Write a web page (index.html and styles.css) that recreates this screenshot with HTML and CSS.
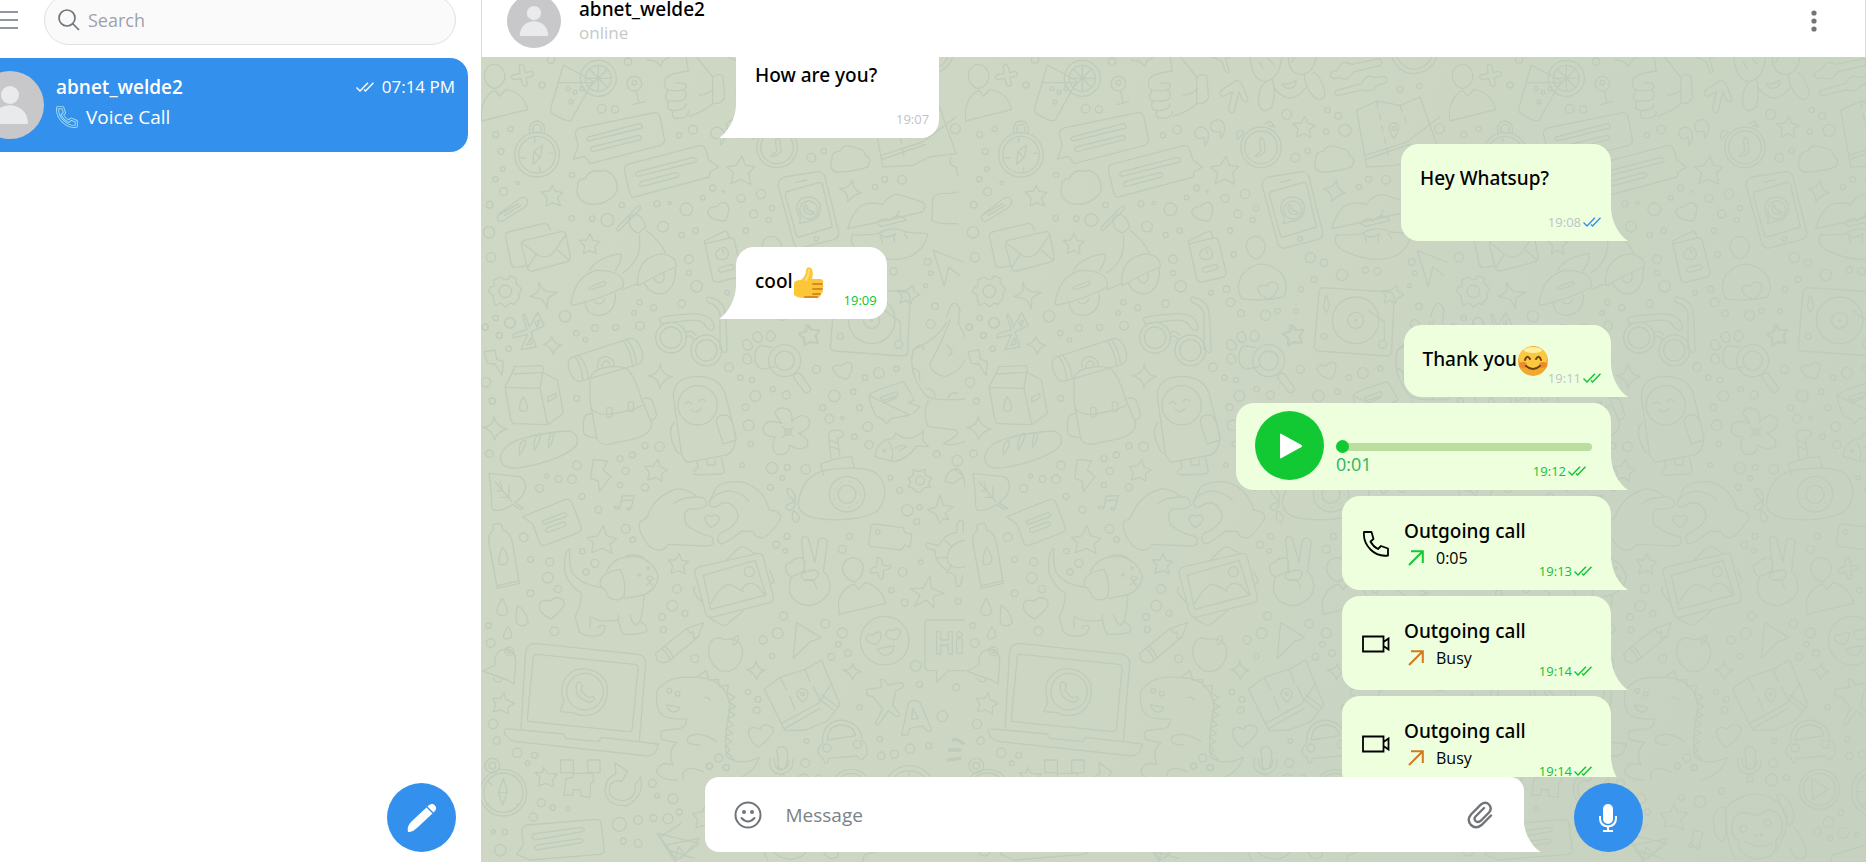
FILE: index.html
```
<!DOCTYPE html>
<html lang="en">

<head>
    <meta charset="utf-8">
    <title>Chat</title>
    <link rel="stylesheet" href="styles.css">
</head>

<body>
    <!-- shared icons -->
    <svg class="sprite" aria-hidden="true">
        <symbol id="checks" viewBox="0 0 18 10">
            <path d="M0.5 5.500L4 9L12 0.700M8 7.500L9.500 9L17.500 0.700" fill="none" stroke="currentColor" stroke-width="1.400" />
        </symbol>
        <symbol id="person" viewBox="0 0 68 68">
            <circle cx="34" cy="34" r="34" fill="#c8c8ca" />
            <circle cx="34" cy="24" r="9" fill="#e9eaec" />
            <path d="M16 53C16 28 52 28 52 53Z" fill="#e9eaec" />
        </symbol>
        <symbol id="phone" viewBox="0 0 26 26">
            <path d="M1 1H8.500L10.500 8L7.500 10.500Q10 15.500 15 18L18 15L25 17.500V24.500Q15 26 7.500 18.500Q0 11 1 1Z" fill="none" stroke="currentColor" stroke-width="1.800" stroke-linejoin="round" />
        </symbol>
        <symbol id="video" viewBox="0 0 28 18">
            <path d="M1 1.500H21.500V16.500H1ZM21.500 7L26.500 3.500V14.500L21.500 11" fill="none" stroke="currentColor" stroke-width="1.800" />
        </symbol>
        <symbol id="arrow" viewBox="0 0 16 16">
            <path d="M1 15L14.500 1.500M3 1.200H14.800V13" fill="none" stroke="currentColor" stroke-width="2" />
        </symbol>
    </svg>

    <div class="app">
        <aside class="sidebar">
            <div class="sidebar-top">
                <button class="menu-btn" aria-label="Menu">
                    <svg width="22" height="18" viewBox="0 0 22 18"><path d="M0 1H22M0 9H22M0 17H22" stroke="#70757f" stroke-width="1.500" /></svg>
                </button>
                <label class="search">
                    <svg width="22" height="22" viewBox="0 0 22 22" fill="none" stroke="#707579" stroke-width="1.700"><circle cx="9" cy="9" r="8" /><path d="M14.500 14.500L21 21" /></svg>
                    <input type="text" placeholder="Search" aria-label="Search">
                </label>
            </div>

            <a class="chat-row" href="#">
                <svg class="chat-avatar"><use href="#person" /></svg>
                <span class="chat-main">
                    <span class="chat-line">
                        <strong>abnet_welde2</strong>
                        <span class="chat-time"><svg class="checks"><use href="#checks" /></svg>07:14 PM</span>
                    </span>
                    <span class="chat-last">
                        <svg width="22" height="22" viewBox="0 0 26 26">
                            <path d="M2 2H8L10 8L7.500 10.500Q10 15.500 15 18L18 15.500L24 18V24Q15 25 8 18Q1 11 2 2Z" fill="none" stroke="#a5e2f3" stroke-width="3.600" stroke-linejoin="round" />
                            <path d="M2 2H8L10 8L7.500 10.500Q10 15.500 15 18L18 15.500L24 18V24Q15 25 8 18Q1 11 2 2Z" fill="none" stroke="#3390ec" stroke-width="1.400" stroke-linejoin="round" />
                        </svg>
                        Voice Call
                    </span>
                </span>
            </a>

            <button class="round-btn compose" aria-label="New message">
                <svg width="30" height="30" viewBox="0 0 30 30">
                    <path d="M1 29C0 24 2 21 5 18L19.500 4.500L25.500 10.500L11 24C8 27 5 29 1 29Z" fill="#fff" />
                    <path d="M20.500 3.500L22.500 1.800C26-1 31 4 28.300 7.500L26.500 9.500Z" fill="#fff" />
                </svg>
            </button>
        </aside>

        <main class="chat">
            <header class="chat-header">
                <svg class="header-avatar"><use href="#person" /></svg>
                <div class="header-name">
                    <h1>abnet_welde2</h1>
                    <p>online</p>
                </div>
                <button class="more-btn" aria-label="More">
                    <svg width="6" height="22" viewBox="0 0 6 22" fill="#707579"><circle cx="3" cy="3" r="2.600" /><circle cx="3" cy="11" r="2.600" /><circle cx="3" cy="19" r="2.600" /></svg>
                </button>
            </header>

            <div class="chat-body">
                <svg class="wallpaper" aria-hidden="true">
                    <defs>
                        <pattern id="doodles" width="484" height="805" patternUnits="userSpaceOnUse" viewBox="0 0 1452 2415">
                            <g fill="none" stroke="#bfcbbb" stroke-width="4" stroke-linejoin="round" stroke-linecap="round">
                                <!-- top of the tile -->
                                <g transform="translate(-75 0)">
                                    <path d="M115 22C75 25 75 85 115 95C160 85 155 25 115 22ZM76 192V160C85 120 105 100 120 102L130 118L150 97C190 105 210 130 214 158Z" />
                                    <path d="M190 25Q200 18 205 30L208 47L225 43Q238 46 229 58L210 62L214 82Q210 93 200 84L195 65L175 68Q160 62 170 54L192 49Z" />
                                    <path d="M322 24L411 72L345 190Q335 198 290 170Q280 160 285 150ZM305 77H408" />
                                    <circle cx="427" cy="64" r="54" /><circle cx="427" cy="64" r="39" />
                                    <path d="M427 25V103M388 64H466M400 37L454 91M454 37L400 91" />
                                    <circle cx="336" cy="95" r="6" /><circle cx="357" cy="106" r="6" /><circle cx="378" cy="95" r="6" /><circle cx="345" cy="135" r="6" />
                                    <circle cx="535" cy="80" r="22" /><circle cx="535" cy="77" r="7" /><path d="M542 103L549 138M530 143L566 134" />
                                    <path d="M690 0L697 42Q630 50 627 70Q620 95 640 100Q680 105 690 92V82Q675 75 660 78M635 102Q620 130 640 132Q690 135 690 118Q692 100 680 100M637 134Q630 160 650 160Q690 160 690 140M650 163Q645 185 665 184Q700 184 697 162M722 0L770 60V140Q750 160 700 178M730 115Q760 112 772 95M772 60Q780 48 800 56L806 120Q800 140 775 140" />
                                    <path d="M810 -2L845 12L856 42Q862 52 867 42L857 5L880 -5M573 8L600 14L615 28L620 12L640 0" />
                                    <path d="M890 70L843 100Q835 115 850 118L878 104L865 155Q870 172 882 165L897 105L908 132Q920 140 924 125L903 75Z" />
                                    <path d="M930 0Q935 70 975 74Q1020 65 1025 0M1045 0Q1045 50 1085 53Q1120 50 1128 0M958 15L970 35M985 5L1000 22M1055 15L1065 0" />
                                    <path d="M975 75Q950 100 957 145Q970 175 995 150Q1010 110 998 70M1092 52Q1100 110 1135 128Q1165 125 1150 90Q1140 55 1120 45M1000 90Q1050 155 1098 92M1027 80Q1048 85 1068 70Q1070 90 1050 94Q1030 95 1027 80Z" />
                                    <path d="M1170 58Q1170 42 1192 40Q1205 5 1235 22L1320 5Q1330 15 1322 25L1240 45Q1225 75 1200 62L1180 65ZM1190 100L1265 80Q1280 48 1305 62L1335 58Q1345 70 1335 78L1312 84Q1295 110 1270 98L1195 116Q1178 112 1190 100Z" />
                                    <path d="M1355 0Q1375 48 1420 50Q1475 45 1490 0M1370 0Q1390 35 1420 37Q1460 35 1475 0" />
                                    <circle cx="243" cy="293" r="67" /><circle cx="243" cy="293" r="55" /><path d="M222 230Q215 195 243 192Q270 195 264 230M260 264L252 303L230 322L234 283ZM234 283L252 303M236 243V256M251 330V342M195 303H208M280 289H290" /><circle cx="243" cy="215" r="13" />
                                    <path d="M370 213L595 167Q608 165 612 180L625 245Q628 258 614 265L402 320L386 298L352 306L367 265L358 232Q358 218 370 213Z" />
                                    <path d="M397 240L550 200Q562 202 558 213L398 252Q388 248 397 240ZM408 270L548 235Q560 237 554 248L410 284Q400 280 408 270Z" />
                                    <path d="M515 322L733 265Q746 265 750 280L758 308L788 330L762 345L760 360L535 420Q525 420 522 410L506 345Q503 328 515 322Z" />
                                    <path d="M543 345L712 301Q725 304 719 315L545 358Q534 352 543 345ZM555 374L660 347Q673 350 666 360L556 389Q546 383 555 374Z" />
                                    <path d="M365 390Q362 365 388 365Q400 335 435 343Q448 335 470 353Q495 390 475 415Q440 450 395 440Q355 425 365 390Z" />
                                    <path d="M782 210Q760 215 765 235Q775 252 792 240L795 265Q808 250 805 228Q800 212 782 210ZM830 188Q808 195 812 214Q820 230 840 222L842 243Q858 225 853 205Q848 188 830 188Z" />
                                    <circle cx="963" cy="271" r="61" /><circle cx="963" cy="271" r="49" />
                                    <path d="M963 240Q955 250 963 282L945 297Q950 305 975 285L972 250ZM975 200L990 192L1004 210L985 205M892 248Q885 220 905 220L912 226Z" />
                                    <path d="M1128 305Q1125 285 1152 282Q1165 255 1205 275Q1225 275 1228 295Q1250 305 1235 330Q1190 345 1140 345Q1115 335 1128 305Z" />
                                    <path d="M1250 160L1310 132L1380 145L1440 120L1500 290L1420 300L1370 325L1280 330ZM1275 295L1400 255L1500 180M1280 306L1410 262" />
                                    <path d="M1310 135L1345 300M1380 145L1400 200" stroke-dasharray="20 16" />
                                    <path d="M1362 245Q1335 205 1360 197Q1390 200 1362 245Z" /><circle cx="1362" cy="215" r="6" />
                                    <path d="M130 470L195 422Q215 418 215 438Q210 450 200 455L140 492Q120 495 125 475L188 440M145 475L195 445" />
                                    <path d="M156 525L265 499Q278 500 284 520M156 525Q145 528 150 545L165 618Q168 632 180 632L208 627M205 550L315 524Q328 522 330 535L343 600Q343 610 335 614L230 642Q218 645 214 632L196 563Q196 553 205 550ZM202 560L250 597Q270 605 290 590L328 535M215 632L240 592M338 608L305 580" />
                                    <circle cx="148" cy="703" r="19" />
                                    <path d="M135 660L142 668L155 667L162 656L182 664L180 678L192 690L197 700L188 708L190 722L175 742L163 738L148 750L135 738L118 745L112 728L112 715L98 705L102 690L114 688L114 668Z" />
                                    <path d="M248 675Q260 702 275 704L305 706Q285 715 275 725L274 755Q262 725 250 725L222 718Q240 712 248 700Z" />
                                    <path d="M485 510L545 448Q560 445 550 460L490 520Q478 525 485 510ZM520 480Q550 455 570 510L548 528Q515 520 520 480ZM550 535Q560 610 500 648M570 520Q610 550 628 587M400 640Q425 600 495 590Q500 610 478 640M345 740Q355 660 420 640Q510 640 502 690Q440 725 350 745ZM400 690L445 673Q455 680 445 685L408 697Q395 700 400 690Z" />
                                    <path d="M545 685Q540 600 620 590Q665 600 660 630Q610 650 548 685M387 735Q390 775 430 775Q480 770 478 710M415 735Q435 750 447 725M565 680Q585 715 620 710Q660 695 658 635M592 660Q600 680 615 678Q630 665 622 650M500 698L545 680" />
                                    <path d="M745 552L805 523Q815 520 818 540M745 552L770 665Q775 678 788 675L850 660Q860 655 858 645L835 550Q833 540 820 543L750 560M792 575Q770 590 785 605Q820 615 817 585Q810 568 798 572L803 590M790 632L828 622Q840 632 830 637L795 646Q782 642 790 632Z" />
                                    <path d="M755 465Q760 448 783 448Q790 435 808 437Q828 450 808 492Q760 490 755 465Z" />
                                    <path d="M985 360L1090 343Q1102 345 1107 360L1148 525Q1150 540 1135 547L1035 573Q1020 575 1014 560L967 388Q963 370 985 360ZM990 405L1090 376Q1098 375 1100 385L1129 510L1030 540Q1022 542 1020 530L988 415ZM1020 376L1052 369" />
                                    <circle cx="1081" cy="545" r="7" /><path d="M1030 500L1033 483Q1010 445 1038 424Q1080 410 1093 445Q1095 490 1055 493Z" /><circle cx="1058" cy="459" r="27" /><path d="M1045 445Q1055 440 1053 455L1068 465Q1080 462 1070 472Q1040 475 1045 445Z" />
                                    <path d="M1175 515Q1195 450 1230 440Q1265 435 1280 443Q1300 410 1330 413L1400 435Q1410 445 1405 455L1400 465M1175 515Q1270 495 1400 465M1260 498Q1290 475 1300 492Q1320 470 1340 480L1350 490Q1310 500 1275 508ZM1190 533Q1260 535 1270 528Q1310 505 1350 525L1410 530M1190 533Q1175 560 1210 580Q1300 625 1370 595Q1410 570 1415 530M1270 530Q1290 550 1320 530M1275 540L1280 558M1315 535V555M1345 530L1355 545M1330 460L1320 480" />
                                    <path d="M947 538Q918 540 918 570Q925 600 950 607Q980 590 975 560Q965 538 947 538ZM905 725Q885 690 905 655Q960 590 1025 650Q1050 690 1030 720Q960 735 905 725ZM955 690Q970 680 982 688Q985 670 1008 678Q1025 695 990 726Q950 715 955 690Z" />
                                    <path d="M1430 425Q1440 405 1480 410L1505 405M1430 425L1428 490Q1440 502 1505 500M1432 580L1520 615M1432 580L1465 688L1478 630L1510 655M1485 300Q1475 325 1500 330L1505 355" />
                                    <path d="M610 785Q620 775 720 770Q770 775 775 810Q770 830 750 810Q740 785 700 790L615 800ZM755 720Q795 725 805 755Q812 800 813 880Q808 895 792 875V770Q785 745 760 738Q745 728 755 720ZM688 828Q705 815 720 835M690 840Q705 830 715 850" />
                                    <circle cx="645" cy="842" r="46" /><circle cx="645" cy="842" r="32" /><circle cx="751" cy="880" r="46" /><circle cx="751" cy="880" r="32" />
                                    <path d="M1150 692L1350 705Q1362 708 1362 725L1355 885Q1352 897 1340 897L1135 882Q1122 880 1123 868L1137 705Q1140 692 1150 692ZM1160 715Q1150 730 1155 735Q1145 745 1158 767Q1175 745 1165 735ZM1285 760L1333 795V850" />
                                    <circle cx="1247" cy="790" r="70" /><circle cx="1247" cy="790" r="24" /><circle cx="1247" cy="790" r="3" /><circle cx="1153" cy="838" r="9" /><circle cx="1328" cy="862" r="12" />
                                    <path d="M205 770Q215 790 220 810L245 767L265 805L225 825L240 870L195 878L215 832L172 843Q168 835 175 830L213 818L200 775ZM237 795L250 790L243 810ZM225 842L228 860L212 865Z" />
                                    <path d="M287 838Q292 860 318 865Q297 870 292 892Q287 870 262 862Q282 858 287 838ZM1190 370Q1190 400 1216 408Q1195 412 1175 434Q1180 408 1150 395Q1180 395 1190 370Z" />
                                    <path d="M289 385L298 403L321 406L304 422L314 447L290 437L271 447L273 423L256 405L280 402ZM402 530L411 550L432 554L416 568L420 590L401 580L382 590L386 567L370 550L392 549ZM858 298L868 325L896 328L878 348L884 382L855 367L825 380L833 348L812 330L840 325ZM1094 178L1103 198L1126 205L1108 217L1112 242L1092 230L1070 240L1074 215L1058 200L1083 198ZM1058 803L1070 820L1091 817L1080 838L1087 857L1062 853L1048 865L1045 842L1028 832L1052 823ZM1370 685L1375 705L1392 713L1370 725L1365 740L1350 730L1332 738L1338 718L1325 700L1350 702Z" />
                                    <circle cx="285" cy="8" r="11" /><circle cx="516" cy="14" r="11" /><circle cx="258" cy="84" r="9" /><circle cx="437" cy="155" r="13" /><circle cx="477" cy="157" r="11" /><circle cx="119" cy="233" r="9" /><circle cx="164" cy="216" r="8" /><circle cx="135" cy="283" r="9" /><circle cx="140" cy="336" r="7" /><circle cx="118" cy="367" r="8" /><circle cx="185" cy="378" r="5" /><circle cx="143" cy="404" r="12" /><circle cx="101" cy="443" r="10" /><circle cx="99" cy="526" r="17" /><circle cx="348" cy="354" r="8" /><circle cx="347" cy="484" r="8" /><circle cx="409" cy="485" r="8" /><circle cx="454" cy="489" r="19" /><circle cx="497" cy="444" r="8" /><circle cx="603" cy="440" r="9" /><circle cx="641" cy="438" r="5" /><circle cx="691" cy="457" r="19" /><circle cx="621" cy="509" r="16" /><circle cx="677" cy="534" r="8" /><circle cx="719" cy="521" r="8" /><circle cx="740" cy="422" r="7" /><circle cx="770" cy="393" r="9" /><circle cx="802" cy="403" r="3" /><circle cx="669" cy="235" r="8" /><circle cx="711" cy="218" r="13" /><circle cx="105" cy="601" r="14" /><circle cx="699" cy="607" r="13" /><circle cx="699" cy="648" r="8" /><circle cx="722" cy="688" r="17" /><circle cx="677" cy="740" r="11" /><circle cx="593" cy="752" r="9" /><circle cx="550" cy="736" r="8" /><circle cx="534" cy="767" r="7" /><circle cx="552" cy="806" r="13" /><circle cx="479" cy="811" r="9" /><circle cx="417" cy="813" r="10" /><circle cx="361" cy="829" r="8" /><circle cx="388" cy="848" r="7" /><circle cx="327" cy="778" r="17" /><circle cx="162" cy="798" r="16" /><circle cx="119" cy="783" r="8" /><circle cx="130" cy="835" r="9" /><circle cx="88" cy="810" r="9" /><circle cx="158" cy="875" r="8" /><circle cx="855" cy="424" r="12" /><circle cx="915" cy="411" r="14" /><circle cx="948" cy="454" r="8" /><circle cx="893" cy="471" r="12" /><circle cx="938" cy="489" r="8" /><circle cx="870" cy="521" r="8" /><circle cx="881" cy="593" r="8" /><circle cx="860" cy="697" r="10" /><circle cx="813" cy="707" r="7" /><circle cx="872" cy="736" r="13" /><circle cx="903" cy="769" r="10" /><circle cx="977" cy="775" r="15" /><circle cx="1013" cy="762" r="8" /><circle cx="1068" cy="763" r="7" /><circle cx="1083" cy="697" r="8" /><circle cx="1122" cy="667" r="9" /><circle cx="1111" cy="602" r="15" /><circle cx="1152" cy="617" r="11" /><circle cx="1206" cy="654" r="17" /><circle cx="1276" cy="639" r="9" /><circle cx="1312" cy="643" r="11" /><circle cx="1040" cy="172" r="15" /><circle cx="1066" cy="302" r="13" /><circle cx="1103" cy="282" r="8" /><circle cx="1158" cy="224" r="8" /><circle cx="1215" cy="220" r="18" /><circle cx="1195" cy="176" r="10" /><circle cx="1163" cy="159" r="8" /><circle cx="1257" cy="390" r="8" /><circle cx="1286" cy="367" r="9" /><circle cx="1338" cy="368" r="13" /><circle cx="1380" cy="96" r="9" /><circle cx="1438" cy="87" r="8" /><circle cx="1415" cy="615" r="10" /><circle cx="1424" cy="649" r="7" /><circle cx="1409" cy="686" r="6" /><circle cx="1437" cy="748" r="10" /><circle cx="1498" cy="215" r="15" />
                                </g>
                                <!-- middle of the tile -->
                                <g transform="translate(-3 729)">
                                    <path d="M12 155L45 150L50 178L70 185L66 226L45 192L22 190ZM75 262L103 205Q98 198 110 200L185 197Q192 205 188 217L100 222M188 217L232 240L250 340L203 374L102 371Q95 370 92 355L75 262L180 265L203 374M180 265L188 217M130 290Q115 315 120 330Q130 340 141 328Q145 312 130 290ZM203 292L228 280V292L203 306Z" />
                                    <path d="M275 172L450 115Q475 115 488 160Q490 185 475 193L300 244Q275 245 265 200Q262 178 275 172ZM285 170Q305 195 308 240M297 168Q320 190 325 235M430 122Q455 160 458 200M442 118Q465 150 470 192M353 202Q350 172 378 170Q405 175 402 200M365 200Q370 180 380 183Q390 185 390 198M330 240Q335 210 370 204Q420 195 440 205Q465 230 482 290L515 370Q515 400 470 415L385 433Q355 433 350 415L330 300ZM332 325Q350 345 385 343Q450 335 485 317M318 345Q305 360 312 400Q318 412 347 413M318 345L335 340M490 295Q515 290 520 310L530 345Q525 360 513 360" />
                                    <rect x="380" y="322" width="16" height="30" rx="7" /><rect x="445" y="305" width="16" height="30" rx="7" />
                                    <path d="M580 290Q580 235 640 230Q715 225 735 280L768 410Q765 455 740 465L620 487L605 465ZM710 370Q705 345 735 345Q750 345 760 375L768 420L730 432ZM582 368Q565 385 575 420L588 450Q595 465 606 458M640 520L655 525L720 522Q735 520 732 510L725 475M650 485L655 500L640 515M680 480L683 495H705V478" /><circle cx="653" cy="316" r="59" /><path d="M616 312Q625 298 635 312M656 303Q668 292 677 303M634 328Q648 345 662 325" />
                                    <path d="M62 470Q70 430 130 415Q200 395 270 393Q300 405 290 435Q250 480 120 503Q60 510 62 470ZM118 465Q115 430 130 422Q140 415 135 435Q125 460 118 465ZM162 450Q160 415 175 402Q185 395 180 415Q170 445 162 450ZM205 442Q205 410 215 398Q225 395 220 410Q215 435 205 442Z" />
                                    <path d="M42 350Q48 380 82 387Q52 395 43 420Q40 390 8 382Q40 380 42 350ZM541 192Q545 225 577 230Q548 238 540 265Q537 235 505 227Q535 225 541 192ZM827 1083Q833 1110 855 1110Q833 1118 830 1140Q823 1117 800 1108Q825 1108 827 1083ZM1120 1090Q1120 1110 1143 1115Q1122 1120 1118 1140Q1112 1118 1090 1110Q1115 1110 1120 1090Z" />
                                    <path d="M27 520L120 530Q150 550 125 590L105 608L130 625L120 628L98 613Q70 635 40 630Q32 620 35 590ZM45 545L95 605M60 545L68 572L52 573M88 558L86 592L62 592M340 478L382 483L370 510L393 530L358 575L355 543L332 535Z" />
                                    <path d="M128 650L258 598Q270 595 276 610L304 680Q306 692 295 698L195 736Q185 738 180 730L158 672ZM190 662L252 638Q265 642 258 650L195 672Q182 670 190 662ZM198 685L253 665Q262 670 256 678L205 697Q192 695 198 685ZM427 588L463 587L453 625M427 588L420 622M427 602L460 600M402 620Q415 615 418 625Q405 632 402 620ZM440 625Q450 620 452 628Q445 635 440 625Z" />
                                    <path d="M480 665Q505 655 505 640Q530 585 590 567Q620 565 650 590Q680 590 680 615Q670 630 625 627Q605 640 620 675Q650 700 695 710Q710 738 680 738L565 733L555 745Q530 760 505 735Q470 690 480 665ZM580 612Q605 590 650 592M688 605Q700 580 745 572Q790 580 805 602M703 575Q710 545 780 545Q850 560 868 630Q910 635 900 660Q860 720 840 713Q825 710 820 695L785 693Q740 730 722 732Q705 720 720 700Q770 680 775 645Q760 600 725 610Q690 635 688 605ZM675 655Q680 640 696 650Q710 638 718 655Q715 670 694 682Q675 670 675 655Z" />
                                    <circle cx="923" cy="396" r="10" /><path d="M885 340Q890 320 915 325Q940 330 935 365Q965 335 985 355Q1000 385 955 400Q990 415 982 440Q955 455 930 435Q925 470 890 462Q870 445 885 410Q845 410 850 380Q860 355 905 370ZM923 396L908 380M923 396L940 382M923 396L940 408M923 396L908 412" />
                                    <path d="M955 610Q965 525 1040 510Q1150 495 1190 520Q1240 575 1190 635Q1120 670 1010 655Q955 645 955 610ZM1030 525L1022 492Q1060 475 1115 470L1123 505M1053 475L1045 405Q1050 385 1085 392Q1095 405 1083 412L1072 415L1080 470M1050 420L1073 430M1053 440L1075 448M945 605Q915 580 922 565Q950 570 945 605Q900 620 930 632Q950 620 945 605M940 632Q930 660 950 668Q970 650 940 632" /><circle cx="1101" cy="583" r="53" /><circle cx="1101" cy="583" r="27" /><circle cx="1101" cy="583" r="40" stroke-dasharray="1 27" />
                                    <path d="M1167 287Q1170 275 1270 245L1290 275L1302 300L1285 308L1320 320L1300 340M1290 345L1235 355L1218 372L1210 358L1190 350Q1175 330 1167 287ZM1202 292L1250 275Q1258 282 1250 288L1208 302ZM1210 310L1250 293M1185 470Q1190 420 1240 415L1247 398L1262 410Q1300 425 1330 392L1328 420L1345 440L1310 438Q1280 480 1240 485ZM1225 425Q1245 450 1235 482M1245 445Q1265 430 1280 440L1258 452" /><circle cx="1213" cy="452" r="4" />
                                    <path d="M1400 50Q1420 -20 1440 30L1435 70Q1450 95 1455 115M1410 60Q1390 120 1350 190Q1350 220 1395 230Q1440 215 1455 180M1400 65Q1380 110 1300 150Q1280 220 1340 290Q1380 305 1455 297M1400 135Q1430 160 1405 165M1300 205Q1325 210 1318 240M1340 265Q1365 265 1365 292M1405 297Q1405 275 1435 280M1345 300Q1325 340 1345 380Q1390 385 1425 390Q1450 400 1390 430Q1410 440 1455 425M1300 150Q1330 120 1330 150" />
                                    <path d="M1300 508L1315 515L1335 508L1335 525L1355 535L1345 548L1352 562L1335 562L1320 578L1308 575L1300 565L1285 560L1292 545L1285 535L1300 525Z" /><circle cx="1320" cy="542" r="13" />
                                    <circle cx="1432" cy="482" r="16" /><path d="M1395 545Q1400 510 1430 505Q1455 520 1455 560M1425 510L1450 530L1420 550L1395 545" />
                                    <path d="M40 692L38 675Q55 665 65 675L68 690Q90 695 98 730L118 850L52 865L27 730Q22 700 40 692ZM68 742Q50 780 60 793Q80 798 84 780Q82 760 68 742ZM50 858L118 842" />
                                    <path d="M1183 672L1270 683L1275 698L1295 702L1290 742L1275 735L1262 750L1178 740Q1165 740 1167 725L1172 685Q1172 674 1183 672ZM1340 740Q1330 725 1350 730L1375 738Q1395 700 1430 697L1432 670Q1440 655 1450 665V700M1340 745L1365 750Q1365 800 1425 825L1430 860Q1445 862 1448 825M1455 720Q1395 735 1403 785Q1415 810 1455 800M1395 720L1415 740M1368 775L1400 772M1400 820L1415 795" /><circle cx="1193" cy="695" r="7" />
                                    <path d="M270 747Q250 750 255 820Q270 860 305 880Q300 930 285 950L298 995Q310 1010 345 1008Q375 1005 375 980Q360 970 355 985M365 862Q300 855 275 815Q265 780 270 747M362 860Q350 820 420 808Q440 845 432 890Q410 910 385 890Q375 865 362 860ZM380 815Q400 765 470 770Q520 780 535 830Q530 870 490 885L435 895M440 768Q480 755 500 785M492 885Q490 930 480 965Q505 975 500 995Q470 1005 430 1003Q415 980 415 945M330 950Q330 975 330 985M335 950Q360 970 415 960M450 945Q455 970 470 975L480 965M500 835Q510 820 520 835L510 845ZM500 855L510 847L518 858" /><circle cx="477" cy="824" r="4" /><circle cx="504" cy="804" r="4" />
                                    <path d="M660 800L835 760Q848 760 850 772L880 890Q882 903 870 908L695 952Q682 953 677 940L645 820Q643 805 660 800ZM670 826L825 781L858 885L692 928ZM692 910Q725 855 745 853Q765 858 790 875M785 870Q800 840 830 855L855 885M735 785L775 745Q790 735 805 748L828 762M645 860Q635 870 650 890L665 905M690 955L725 975Q735 980 745 970L790 932M868 810L883 845L870 855" /><circle cx="808" cy="815" r="15" />
                                    <path d="M945 775Q930 790 917 795Q915 825 935 830Q925 850 930 880Q945 915 990 917Q1045 905 1050 860Q1045 820 1030 815L1042 725Q1030 705 1015 720L1005 788L985 715Q970 700 965 720L975 820M945 778Q965 765 975 785L970 815L935 830M965 820Q990 810 1005 810Q1025 820 1005 838L975 840Q960 835 965 820ZM975 842L1000 840L1010 865" />
                                    <path d="M1117 773Q1085 780 1088 810Q1095 840 1125 845Q1150 830 1150 800Q1145 775 1117 773ZM1077 943L1075 905Q1085 865 1122 852L1138 868L1155 847Q1205 860 1217 910ZM1192 775Q1205 765 1208 797L1230 797Q1240 805 1210 812V835Q1200 845 1193 817L1172 820Q1165 805 1190 800Z" />
                                    <path d="M67 895Q45 930 52 940Q70 955 83 938Q80 915 67 895ZM112 915Q105 965 112 972Q130 985 145 968Q140 935 112 915ZM83 980Q65 1010 73 1015Q85 1020 95 1010Q95 990 83 980ZM178 915Q180 895 212 903Q225 885 250 900Q262 920 213 957Q175 940 178 915ZM806 1295Q808 1275 840 1287Q850 1265 878 1282Q890 1300 835 1342Q805 1320 806 1295ZM1058 205Q1065 190 1085 198Q1100 180 1115 192Q1120 215 1100 238Q1065 230 1058 205Z" />
                                    <path d="M803 172M825 165Q820 195 845 208L885 200M825 165Q830 132 850 138L875 142M835 95Q815 98 820 115Q830 135 845 122Q850 105 835 95ZM870 92Q855 98 860 118Q875 132 885 112Q885 95 870 92ZM800 118Q782 120 790 143Q805 158 818 142Q815 125 800 118ZM800 160Q785 165 790 185Q805 200 816 185Q815 165 800 160ZM942 225Q955 215 962 222L992 265Q990 280 975 278L942 235Z" /><circle cx="914" cy="182" r="48" /><circle cx="914" cy="182" r="29" />
                                    <path d="M527 1060L620 985L670 968L655 1010L565 1085Q545 1095 530 1078ZM545 1045Q560 1055 570 1080M555 1040Q570 1050 580 1075M620 985L630 1000L640 995V1015L655 1010M735 1020Q700 1000 687 1040Q680 1085 720 1112Q750 1120 770 1100Q800 1065 780 1030Q760 1010 735 1020ZM760 1030Q755 1010 775 1007Q780 1030 760 1035" />
                                    <path d="M950 968L1022 1012Q1015 1018 990 1025L940 1075ZM1345 960H1455M1345 960Q1335 960 1335 975V1100Q1337 1112 1350 1112H1370V1146L1405 1112H1455M1370 995H1382V1020H1405V995H1417V1062H1405V1035H1382V1062H1370ZM1430 1015H1447V1060H1430Z" /><circle cx="1214" cy="1022" r="73" /><circle cx="1438" cy="1003" r="8" /><path d="M1158 1015Q1160 1000 1180 1005Q1190 990 1203 1000Q1205 1020 1190 1033Q1160 1030 1158 1015ZM1217 1000Q1225 985 1238 992Q1250 980 1262 993Q1262 1010 1243 1020Q1215 1015 1217 1000ZM1192 1047L1243 1037Q1240 1065 1215 1067Q1200 1062 1192 1047Z" />
                                    <path d="M8 1113L45 1095Q40 1050 80 1047Q110 1055 107 1090L102 1152L82 1140ZM40 1132Q40 1148 62 1145L66 1135" /><circle cx="88" cy="1054" r="13" /><circle cx="88" cy="1054" r="5" />
                                    <path d="M123 1285L137 1055Q143 1030 165 1030L475 1063Q497 1068 497 1090L478 1325M142 1258L160 1070Q160 1063 170 1063L465 1093Q475 1095 474 1105L457 1285Q455 1295 445 1295L150 1265Q142 1265 142 1258ZM72 1290Q75 1285 90 1287L250 1302L258 1315L355 1325L365 1312L535 1332Q530 1365 505 1368L110 1325Q75 1320 72 1290Z" /><circle cx="315" cy="1175" r="55" /><path d="M240 1235L252 1205Q230 1140 285 1110Q350 1095 380 1150Q390 1215 345 1240Q310 1255 280 1238ZM290 1150Q300 1140 307 1155L303 1172L325 1193L340 1190Q350 1200 330 1207Q280 1195 290 1150Z" />
                                    <path d="M640 1132Q560 1125 530 1175Q525 1230 550 1248Q580 1260 620 1257Q620 1290 575 1288L545 1293Q535 1315 550 1320L590 1328Q560 1355 580 1395Q540 1380 530 1415Q540 1440 590 1440M640 1132Q740 1130 750 1220Q730 1330 740 1370Q780 1400 837 1372Q825 1420 760 1440M650 1132L678 1112L687 1140L715 1138L718 1160L745 1155L742 1180M745 1180L765 1192L745 1205L767 1220L745 1232L765 1245L742 1258L760 1275L738 1285L758 1300L735 1310L755 1325L737 1335L750 1350L740 1358L755 1370L765 1385M560 1215L600 1222Q590 1240 575 1235Q565 1230 560 1215ZM672 1192Q685 1190 692 1202M710 1325Q660 1290 625 1310Q610 1335 660 1335M610 1440Q600 1405 640 1405L670 1415" /><circle cx="568" cy="1172" r="7" /><circle cx="593" cy="1181" r="7" />
                                    <path d="M853 1168L900 1132L975 1108L1025 1080L1080 1215L1040 1265L975 1290L915 1292ZM900 1132L920 1170M930 1190L945 1230M975 1108L990 1145M1000 1160L1015 1190M905 1270L1015 1210L1055 1150M915 1285L1020 1225M1015 1195L1060 1230M1025 1185L1075 1222" /><path d="M970 1207Q935 1180 965 1165Q1000 1170 970 1207Z" /><circle cx="968" cy="1182" r="5" />
                                    <path d="M1028 1330Q1025 1265 1085 1260Q1145 1270 1145 1320Q1165 1330 1160 1365L1145 1380Q1140 1382 1132 1368L1045 1375Q1045 1392 1035 1390L1028 1372Q1010 1365 1015 1345ZM1042 1320Q1045 1275 1085 1275Q1120 1275 1127 1307Z" /><circle cx="1041" cy="1344" r="12" /><circle cx="1132" cy="1333" r="12" />
                                    <path d="M1160 1168L1205 1162L1200 1140Q1215 1132 1222 1155L1265 1148Q1275 1155 1265 1165L1248 1172L1238 1215L1258 1240Q1258 1255 1245 1248L1225 1232L1195 1275Q1182 1278 1190 1262L1208 1225L1178 1190L1160 1185ZM1265 1305L1285 1210Q1300 1195 1320 1207L1355 1290Q1350 1300 1338 1290L1328 1278L1290 1285L1282 1305ZM1298 1225L1315 1255L1295 1258Z" />
                                    <path d="M1420 1320Q1425 1312 1450 1330M1408 1350H1440M1405 1380L1440 1375" stroke-width="10" />
                                    <path d="M978 73L992 90L1018 92L1005 108L1013 130L988 128L972 138L970 115L955 102L975 95ZM533 478L540 500L562 510L545 522L545 543L528 532L503 540L508 518L495 500L520 498ZM370 677L380 707L410 716L390 732L396 760L368 745L335 758L340 728L322 713L352 708ZM597 760L605 780L626 785L610 798L615 822L597 812L573 820L578 797L565 780L587 780ZM1380 585L1390 615L1420 620L1395 640L1408 660L1390 655L1378 670L1370 645L1343 628L1368 622ZM1350 828L1355 865L1393 880L1360 890L1362 925L1340 900L1303 920L1320 885L1290 865L1330 865ZM72 1178L78 1198L103 1210L85 1220L85 1242L65 1230L40 1235L47 1213L38 1195L62 1195Z" />
                                    <circle cx="15" cy="82" r="9" /><circle cx="90" cy="68" r="15" /><circle cx="58" cy="106" r="9" /><circle cx="18" cy="247" r="14" /><circle cx="37" cy="303" r="9" /><circle cx="290" cy="295" r="9" /><circle cx="28" cy="461" r="11" /><circle cx="200" cy="528" r="6" /><circle cx="236" cy="537" r="10" /><circle cx="276" cy="538" r="13" /><circle cx="179" cy="565" r="12" /><circle cx="291" cy="496" r="13" /><circle cx="306" cy="589" r="9" /><circle cx="355" cy="629" r="10" /><circle cx="420" cy="476" r="9" /><circle cx="457" cy="465" r="9" /><circle cx="437" cy="513" r="11" /><circle cx="420" cy="555" r="8" /><circle cx="495" cy="437" r="9" /><circle cx="539" cy="440" r="14" /><circle cx="495" cy="562" r="11" /><circle cx="437" cy="686" r="13" /><circle cx="458" cy="719" r="8" /><circle cx="131" cy="712" r="13" /><circle cx="152" cy="778" r="9" /><circle cx="209" cy="786" r="12" /><circle cx="203" cy="833" r="16" /><circle cx="234" cy="867" r="11" /><circle cx="152" cy="880" r="10" /><circle cx="307" cy="754" r="8" /><circle cx="345" cy="790" r="12" /><circle cx="318" cy="816" r="9" /><circle cx="223" cy="994" r="13" /><circle cx="26" cy="977" r="8" /><circle cx="32" cy="1029" r="13" /><circle cx="591" cy="867" r="13" /><circle cx="577" cy="917" r="16" /><circle cx="615" cy="940" r="9" /><circle cx="546" cy="951" r="10" /><circle cx="550" cy="989" r="9" /><circle cx="644" cy="1076" r="12" /><circle cx="747" cy="202" r="13" /><circle cx="781" cy="233" r="8" /><circle cx="816" cy="240" r="8" /><circle cx="826" cy="288" r="16" /><circle cx="878" cy="268" r="8" /><circle cx="919" cy="285" r="12" /><circle cx="796" cy="322" r="10" /><circle cx="806" cy="376" r="16" /><circle cx="812" cy="432" r="8" /><circle cx="786" cy="495" r="7" /><circle cx="876" cy="504" r="17" /><circle cx="922" cy="502" r="9" /><circle cx="977" cy="508" r="14" /><circle cx="907" cy="534" r="7" /><circle cx="871" cy="562" r="9" /><circle cx="1009" cy="208" r="12" /><circle cx="1063" cy="288" r="17" /><circle cx="1120" cy="275" r="8" /><circle cx="1028" cy="323" r="9" /><circle cx="1048" cy="356" r="13" /><circle cx="1087" cy="354" r="5" /><circle cx="1139" cy="323" r="9" /><circle cx="1163" cy="380" r="14" /><circle cx="1123" cy="410" r="8" /><circle cx="1167" cy="434" r="12" /><circle cx="1197" cy="219" r="16" /><circle cx="1155" cy="233" r="8" /><circle cx="1249" cy="206" r="8" /><circle cx="1352" cy="72" r="13" /><circle cx="1370" cy="463" r="10" /><circle cx="1231" cy="533" r="7" /><circle cx="1259" cy="571" r="9" /><circle cx="1282" cy="631" r="17" /><circle cx="1318" cy="622" r="8" /><circle cx="1310" cy="665" r="9" /><circle cx="1108" cy="709" r="9" /><circle cx="1087" cy="748" r="12" /><circle cx="921" cy="709" r="9" /><circle cx="889" cy="734" r="10" /><circle cx="916" cy="752" r="7" /><circle cx="1268" cy="816" r="13" /><circle cx="1322" cy="787" r="7" /><circle cx="1234" cy="871" r="8" /><circle cx="1274" cy="908" r="10" /><circle cx="1435" cy="904" r="9" /><circle cx="911" cy="948" r="12" /><circle cx="1036" cy="971" r="13" /><circle cx="893" cy="1000" r="16" /><circle cx="849" cy="1020" r="12" /><circle cx="877" cy="1068" r="8" /><circle cx="1087" cy="999" r="15" /><circle cx="1075" cy="1033" r="8" /><circle cx="1104" cy="1059" r="10" /><circle cx="1054" cy="1070" r="10" /><circle cx="1307" cy="1098" r="16" /><circle cx="1318" cy="1153" r="9" /><circle cx="1429" cy="1162" r="10" /><circle cx="804" cy="1176" r="8" /><circle cx="834" cy="1198" r="9" /><circle cx="830" cy="1231" r="10" /><circle cx="979" cy="1323" r="7" /><circle cx="1139" cy="1222" r="8" /><circle cx="1387" cy="1249" r="16" /><circle cx="1290" cy="1346" r="14" /><circle cx="1346" cy="1337" r="9" /><circle cx="1199" cy="1318" r="8" /><circle cx="1204" cy="1367" r="11" /><circle cx="1243" cy="1363" r="12" /><circle cx="39" cy="1272" r="14" /><circle cx="50" cy="1322" r="11" /><circle cx="111" cy="1358" r="14" /><circle cx="164" cy="1366" r="9" /><circle cx="143" cy="1390" r="7" /><circle cx="716" cy="1374" r="12" />
                                </g>
                                <!-- bottom of the tile -->
                                <g transform="translate(-363 2109)">
                                    <circle cx="430" cy="98" r="70" /><circle cx="430" cy="98" r="59" /><circle cx="397" cy="17" r="22" /><circle cx="397" cy="17" r="10" /><path d="M430 55L442 95L428 135L415 97ZM415 97H442M385 65L395 75M468 130L475 137M385 130L378 137" />
                                    <path d="M550 22L562 40L592 42L578 60L580 80L557 70L535 78L540 52L525 38L548 38ZM602 0H640V38H602ZM683 0H720V38H683ZM640 40L700 40L700 65L692 70L690 112L662 108V90L640 88L638 106L612 105L618 55L640 52ZM765 8L803 35L785 65Q770 55 750 75Q740 120 790 122Q830 115 825 75L842 50Q855 110 800 137Q740 140 735 90Q738 50 768 42Z" />
                                    <path d="M500 195L710 178Q722 180 723 190L733 270Q733 280 720 283L510 300L470 283L490 255L485 215Q485 200 500 195ZM520 222L665 202Q680 207 668 215L525 240Q508 232 520 222ZM530 255L660 236Q675 240 665 248L530 270Q518 262 530 255ZM892 220L1018 250L950 300ZM892 220L945 305L955 260L980 290" />
                                    <circle cx="544" cy="128" r="12" /><circle cx="578" cy="143" r="8" /><circle cx="624" cy="146" r="6" /><circle cx="520" cy="171" r="12" /><circle cx="400" cy="215" r="6" /><circle cx="434" cy="216" r="8" /><circle cx="421" cy="271" r="17" /><circle cx="778" cy="193" r="21" /><circle cx="834" cy="180" r="13" /><circle cx="880" cy="174" r="10" /><circle cx="924" cy="176" r="15" /><circle cx="790" cy="243" r="9" /><circle cx="834" cy="250" r="12" /><circle cx="877" cy="70" r="12" /><circle cx="891" cy="107" r="7" /><circle cx="939" cy="116" r="15" /><circle cx="958" cy="156" r="9" /><circle cx="1048" cy="18" r="9" /><circle cx="1098" cy="23" r="9" />
                                </g>
                                <g transform="translate(0 2019)">
                                    <path d="M890 75Q880 50 905 50Q922 55 920 75L915 110Q905 125 892 112ZM868 85Q860 130 900 132Q940 125 935 88M880 85Q878 118 900 120Q925 115 923 90M898 135L893 155H912L908 133M675 222L685 245L715 248L695 270L703 300L675 285L645 292L650 270L635 250L665 245ZM735 300L762 308L750 350M735 300L725 345M718 345Q730 335 735 348Q725 360 718 345ZM740 350Q750 345 755 355Q745 365 740 350Z" />
                                    <path d="M830 235Q870 190 930 193Q990 200 1015 260Q1010 340 960 380M830 235Q800 225 793 265Q795 330 820 335L830 320ZM830 235Q830 340 860 390M850 290Q850 240 900 250Q925 265 950 240Q1000 240 1000 290Q1000 320 980 330Q990 380 930 388Q865 380 868 330Q845 320 850 290ZM890 335Q930 360 970 340M985 200Q980 190 1000 195Q1040 225 1035 270L1020 290L1005 250ZM1035 290Q1080 350 1070 380Q1040 400 1020 350M1150 375L1250 345M1150 375L1145 396M555 345L655 325L600 385M540 320L600 280M560 360L640 385" />
                                    <circle cx="883" cy="296" r="10" /><circle cx="956" cy="279" r="10" /><circle cx="922" cy="316" r="3" /><circle cx="937" cy="314" r="3" /><circle cx="1111" cy="178" r="60" /><circle cx="1111" cy="178" r="48" /><path d="M1088 145L1138 178L1092 208Z" />
                                    <circle cx="1285" cy="185" r="78" /><circle cx="1285" cy="185" r="63" /><path d="M1285 122V248M1222 185H1348M1240 140L1330 230M1330 140L1240 230" />
                                    <circle cx="973" cy="99" r="13" /><circle cx="968" cy="150" r="18" /><circle cx="1012" cy="143" r="9" /><circle cx="818" cy="183" r="9" /><circle cx="697" cy="202" r="9" /><circle cx="753" cy="215" r="17" /><circle cx="1139" cy="277" r="16" /><circle cx="1176" cy="248" r="9" /><circle cx="1105" cy="305" r="12" /><circle cx="1144" cy="325" r="8" /><circle cx="1183" cy="308" r="16" /><circle cx="1222" cy="315" r="7" /><circle cx="686" cy="109" r="9" /><circle cx="736" cy="112" r="9" />
                                </g>
                            </g>
                        </pattern>
                    </defs>
                    <rect width="100%" height="100%" fill="url(#doodles)" />
                </svg>

                <div class="messages">
                    <div class="message in tall">
                        <p>How are you?</p>
                        <span class="meta">19:07</span>
                    </div>
                    <div class="message out tall">
                        <p>Hey Whatsup?</p>
                        <span class="meta read">19:08<svg class="checks"><use href="#checks" /></svg></span>
                    </div>
                    <div class="message in short">
                        <p>cool<svg class="emoji" viewBox="0 0 32 32" role="img" aria-label="thumbs up">
                                <path d="M1 16Q2 13 8 13Q13 9 13 3Q14-1 18 1Q21 4 19 12H28Q32 14 29 17Q32 19 29 22Q31 25 28 27Q27 32 22 31H11Q4 31 1 28Z" fill="#fbc638" />
                                <path d="M20 17H29M20 22H29M20 27H27M12 30H24" fill="none" stroke="#d98a1f" stroke-width="2" stroke-linecap="round" />
                                <path d="M13 13Q16 8 16 3" fill="none" stroke="#ffe07c" stroke-width="2" stroke-linecap="round" />
                            </svg></p>
                        <span class="meta sent">19:09</span>
                    </div>
                    <div class="message out short">
                        <p>Thank you<svg class="emoji" viewBox="0 0 32 32" role="img" aria-label="smile">
                                <circle cx="16" cy="16" r="15" fill="#f0a92c" />
                                <ellipse cx="16" cy="13" rx="14" ry="11" fill="#fbc93f" />
                                <ellipse cx="16" cy="5" rx="9" ry="3" fill="#fff0a0" />
                                <ellipse cx="6" cy="20" rx="4" ry="3" fill="#ee8a2c" /><ellipse cx="26" cy="20" rx="4" ry="3" fill="#ee8a2c" />
                                <path d="M8 15Q10 9 13 14M19 14Q22 9 24 15M9 21Q16 27 23 21" fill="none" stroke="#713f10" stroke-width="2" stroke-linecap="round" />
                            </svg></p>
                        <span class="meta">19:11<svg class="checks sent"><use href="#checks" /></svg></span>
                    </div>
                    <div class="message out audio">
                        <button class="play" aria-label="Play">
                            <svg width="24" height="26" viewBox="0 0 24 26"><path d="M1 1.500Q1 0 2.500 1L22.500 12Q24 13 22.500 14L2.500 25Q1 26 1 24.500Z" fill="#fff" /></svg>
                        </button>
                        <div class="track">
                            <input type="range" min="0" max="100" value="0" aria-label="Position">
                            <span>0:01</span>
                        </div>
                        <span class="meta sent">19:12<svg class="checks"><use href="#checks" /></svg></span>
                    </div>
                    <div class="message out call">
                        <svg class="call-icon"><use href="#phone" /></svg>
                        <div>
                            <p>Outgoing call</p>
                            <div class="call-status"><svg class="arrow ok"><use href="#arrow" /></svg>0:05</div>
                        </div>
                        <span class="meta sent">19:13<svg class="checks"><use href="#checks" /></svg></span>
                    </div>
                    <div class="message out call">
                        <svg class="call-icon"><use href="#video" /></svg>
                        <div>
                            <p>Outgoing call</p>
                            <div class="call-status"><svg class="arrow busy"><use href="#arrow" /></svg>Busy</div>
                        </div>
                        <span class="meta sent">19:14<svg class="checks"><use href="#checks" /></svg></span>
                    </div>
                    <div class="message out call">
                        <svg class="call-icon"><use href="#video" /></svg>
                        <div>
                            <p>Outgoing call</p>
                            <div class="call-status"><svg class="arrow busy"><use href="#arrow" /></svg>Busy</div>
                        </div>
                        <span class="meta sent">19:14<svg class="checks"><use href="#checks" /></svg></span>
                    </div>
                </div>

                <form class="composer">
                    <div class="composer-box">
                        <button type="button" aria-label="Emoji">
                            <svg width="28" height="28" viewBox="0 0 28 28" fill="none" stroke="#707579" stroke-width="2"><circle cx="14" cy="14" r="12.500" /><path d="M7.500 17Q14 24 20.500 17" stroke-linecap="round" /><circle cx="10" cy="11" r="1" /><circle cx="18" cy="11" r="1" /></svg>
                        </button>
                        <input type="text" placeholder="Message" aria-label="Message">
                        <button type="button" aria-label="Attach">
                            <svg width="26" height="28" viewBox="0 0 26 28" fill="none" stroke="#707579" stroke-width="2.400" stroke-linecap="round"><path d="M24 14.500L14.500 24Q9 28.500 4 24Q-0.500 19 4 13.500L14 3.500Q18.500 0 22 3.500Q25.500 7.500 22 11.500L13.500 20Q10.500 22 8.500 20Q6.500 17.500 8.500 15.500L17 7" /></svg>
                        </button>
                    </div>
                    <button type="button" class="round-btn" aria-label="Record voice">
                        <svg width="18" height="28" viewBox="0 0 18 28" fill="none" stroke="#fff" stroke-width="2"><rect x="4" y="0" width="10" height="20" rx="5" fill="#fff" stroke="none" /><path d="M1 12V14Q1 22 9 22.500Q17 22 17 14V12M9 22V27M4 27H14" /></svg>
                    </button>
                </form>
            </div>
        </main>
    </div>
</body>

</html>
```
FILE: styles.css
```
* {
    box-sizing: border-box;
}

body {
    margin: 0;
    overflow: hidden;
    font-family: "Open Sans", "Noto Sans", sans-serif;
    font-size: 18px;
    color: #000;
    background-color: #fff;
}

h1,
p {
    margin: 0;
}

button {
    padding: 0;
    border: none;
    background: none;
    cursor: pointer;
    display: flex;
    align-items: center;
    justify-content: center;
}

input {
    font-family: inherit;
    border: none;
    outline: none;
    background: none;
    padding: 0;
    margin: 0;
    min-width: 0;
}

.sprite {
    position: absolute;
    width: 0;
    height: 0;
}

/* the whole app is scrolled a little up and to the left */
.app {
    display: flex;
    height: calc(100vh + 15px);
    margin: -15px 0 0 -36px;
}

/* sidebar */
.sidebar {
    flex: 0 0 517px;
    display: flex;
    flex-direction: column;
    align-items: stretch;
    padding-bottom: 10px;
}

.sidebar-top {
    display: flex;
    align-items: center;
    gap: 26px;
    height: 72px;
    padding: 0 25px 2px 32px;
}

.search {
    flex: 1;
    display: flex;
    align-items: center;
    gap: 8px;
    height: 50px;
    padding: 0 13px;
    border: 1px solid #dfe1e5;
    border-radius: 25px;
    background-color: #fafafa;
}

.search input {
    flex: 1;
    font-size: 18px;
}

.search input::placeholder {
    color: #9ca3af;
}

.chat-row {
    display: flex;
    align-items: center;
    gap: 12px;
    height: 94px;
    margin: 1px 13px 0 0;
    padding: 0 13px 0 12px;
    border-radius: 18px;
    background-color: #3390ec;
    color: #fff;
    text-decoration: none;
}

.chat-avatar {
    flex: none;
    width: 68px;
    height: 68px;
}

.chat-main {
    flex: 1;
    display: flex;
    flex-direction: column;
    gap: 2px;
    padding-bottom: 6px;
    line-height: 28px;
}

.chat-line {
    display: flex;
    justify-content: space-between;
}

.chat-line strong {
    font-size: 19px;
    font-weight: 600;
}

.chat-time {
    display: flex;
    align-items: center;
    gap: 8px;
    font-size: 17px;
}

.chat-last {
    display: flex;
    align-items: center;
    gap: 8px;
    font-size: 19px;
}

.checks {
    width: 18px;
    height: 10px;
}

.round-btn {
    flex: none;
    width: 69px;
    height: 69px;
    border-radius: 50%;
    background-color: #3390ec;
}

.compose {
    margin: auto 25px 0 auto;
}

/* chat */
.chat {
    flex: 1;
    min-width: 0;
    display: flex;
    flex-direction: column;
}

.chat-header {
    flex: none;
    display: flex;
    align-items: center;
    gap: 18px;
    height: 72px;
    padding: 0 48px 0 25px;
    border-left: 1px solid #dadce0;
    border-right: 1px solid #dadce0;
    background-color: #fff;
}

.header-avatar {
    width: 54px;
    height: 54px;
}

.header-name {
    flex: 1;
    line-height: 23px;
}

.header-name h1 {
    font-size: 19px;
    font-weight: 500;
}

.header-name p {
    font-size: 17px;
    color: #c4c9cc;
}

.chat-body {
    position: relative;
    flex: 1;
    min-height: 0;
    display: flex;
    flex-direction: column;
    background: linear-gradient(115deg, #ced8c4, #ccd6c3 50%, #c6d1c0);
}

.wallpaper {
    position: absolute;
    inset: 0;
    width: 100%;
    height: 100%;
}

.messages {
    position: relative;
    flex: 1;
    min-height: 0;
    overflow: hidden;
    display: flex;
    flex-direction: column;
    align-items: flex-start;
    gap: 6px;
    width: 100%;
    max-width: 915px;
    margin: 0 auto;
    padding: 0 20px;
}

.message {
    position: relative;
    flex: none;
    padding: 0 62px 0 19px;
    border-radius: 18px;
}

.message:first-child {
    margin-top: -16px;
}

.message p,
.header-name h1 {
    font-family: "Noto Sans", "Open Sans", sans-serif;
}

.message p {
    font-size: 19px;
    font-weight: 500;
    line-height: 28px;
}

.in {
    background-color: #fff;
    border-bottom-left-radius: 0;
}

.out {
    align-self: flex-end;
    background-color: #eeffde;
    border-bottom-right-radius: 0;
}

/* bubble tails */
.in::before,
.out::after,
.composer-box::after {
    content: "";
    position: absolute;
    bottom: 0;
    width: 18px;
    height: 32px;
    background-color: inherit;
}

.in::before {
    right: 100%;
    clip-path: path("M18 0C17 13 11 25 1 32H18Z");
}

.out::after,
.composer-box::after {
    left: 100%;
    clip-path: path("M0 0C1 13 7 25 17 32H0Z");
}

.tall {
    height: 97px;
    padding-top: 20px;
}

.short {
    height: 72px;
    padding-top: 20px;
}

.short p {
    display: flex;
}

.emoji {
    width: 32px;
    height: 32px;
}

.meta {
    position: absolute;
    right: 10px;
    bottom: 9px;
    display: flex;
    align-items: center;
    gap: 2px;
    font-size: 13px;
    line-height: 20px;
    color: #bfc3c6;
}

.read .checks {
    color: #3390ec;
}

.sent {
    color: #0ec433;
}

.audio {
    display: flex;
    align-items: center;
    gap: 12px;
    width: 375px;
    height: 87px;
    padding: 0 19px 2px;
}

.play {
    flex: none;
    width: 69px;
    height: 69px;
    padding-left: 3px;
    border-radius: 50%;
    background-color: #12c934;
}

.track {
    flex: 1;
    display: flex;
    flex-direction: column;
    padding-top: 24px;
    font-size: 18px;
    line-height: 22px;
    color: #2bb55a;
}

.track input {
    appearance: none;
    width: 100%;
    height: 13px;
}

.track input::-webkit-slider-runnable-track {
    height: 8px;
    border-radius: 4px;
    background-color: #bbdd9f;
}

.track input::-webkit-slider-thumb {
    appearance: none;
    width: 13px;
    height: 13px;
    margin-top: -3px;
    border-radius: 50%;
    background-color: #12c934;
}

.audio .meta {
    right: 25px;
}

.call {
    display: flex;
    align-items: center;
    gap: 14px;
    width: 269px;
    height: 94px;
    padding: 2px 19px 0 20px;
}

.call .meta {
    right: 19px;
}

.call-icon {
    width: 28px;
    height: 26px;
}

.call-status {
    display: flex;
    align-items: center;
    gap: 12px;
    padding-left: 4px;
    font-size: 16px;
    line-height: 26px;
}

.arrow {
    width: 16px;
    height: 16px;
}

.ok {
    color: #12c934;
}

.busy {
    color: #d17a1c;
}

/* composer */
.composer {
    position: relative;
    flex: none;
    display: flex;
    align-items: flex-end;
    gap: 50px;
    width: 100%;
    max-width: 938px;
    margin: 0 auto 10px;
}

.composer-box {
    position: relative;
    flex: 1;
    display: flex;
    align-items: center;
    gap: 24px;
    height: 75px;
    padding: 0 31px 0 29px;
    border-radius: 14px 14px 0 14px;
    background-color: #fff;
}

.composer-box input {
    flex: 1;
    font-size: 19px;
}

.composer-box input::placeholder {
    color: #7b8286;
}
```
